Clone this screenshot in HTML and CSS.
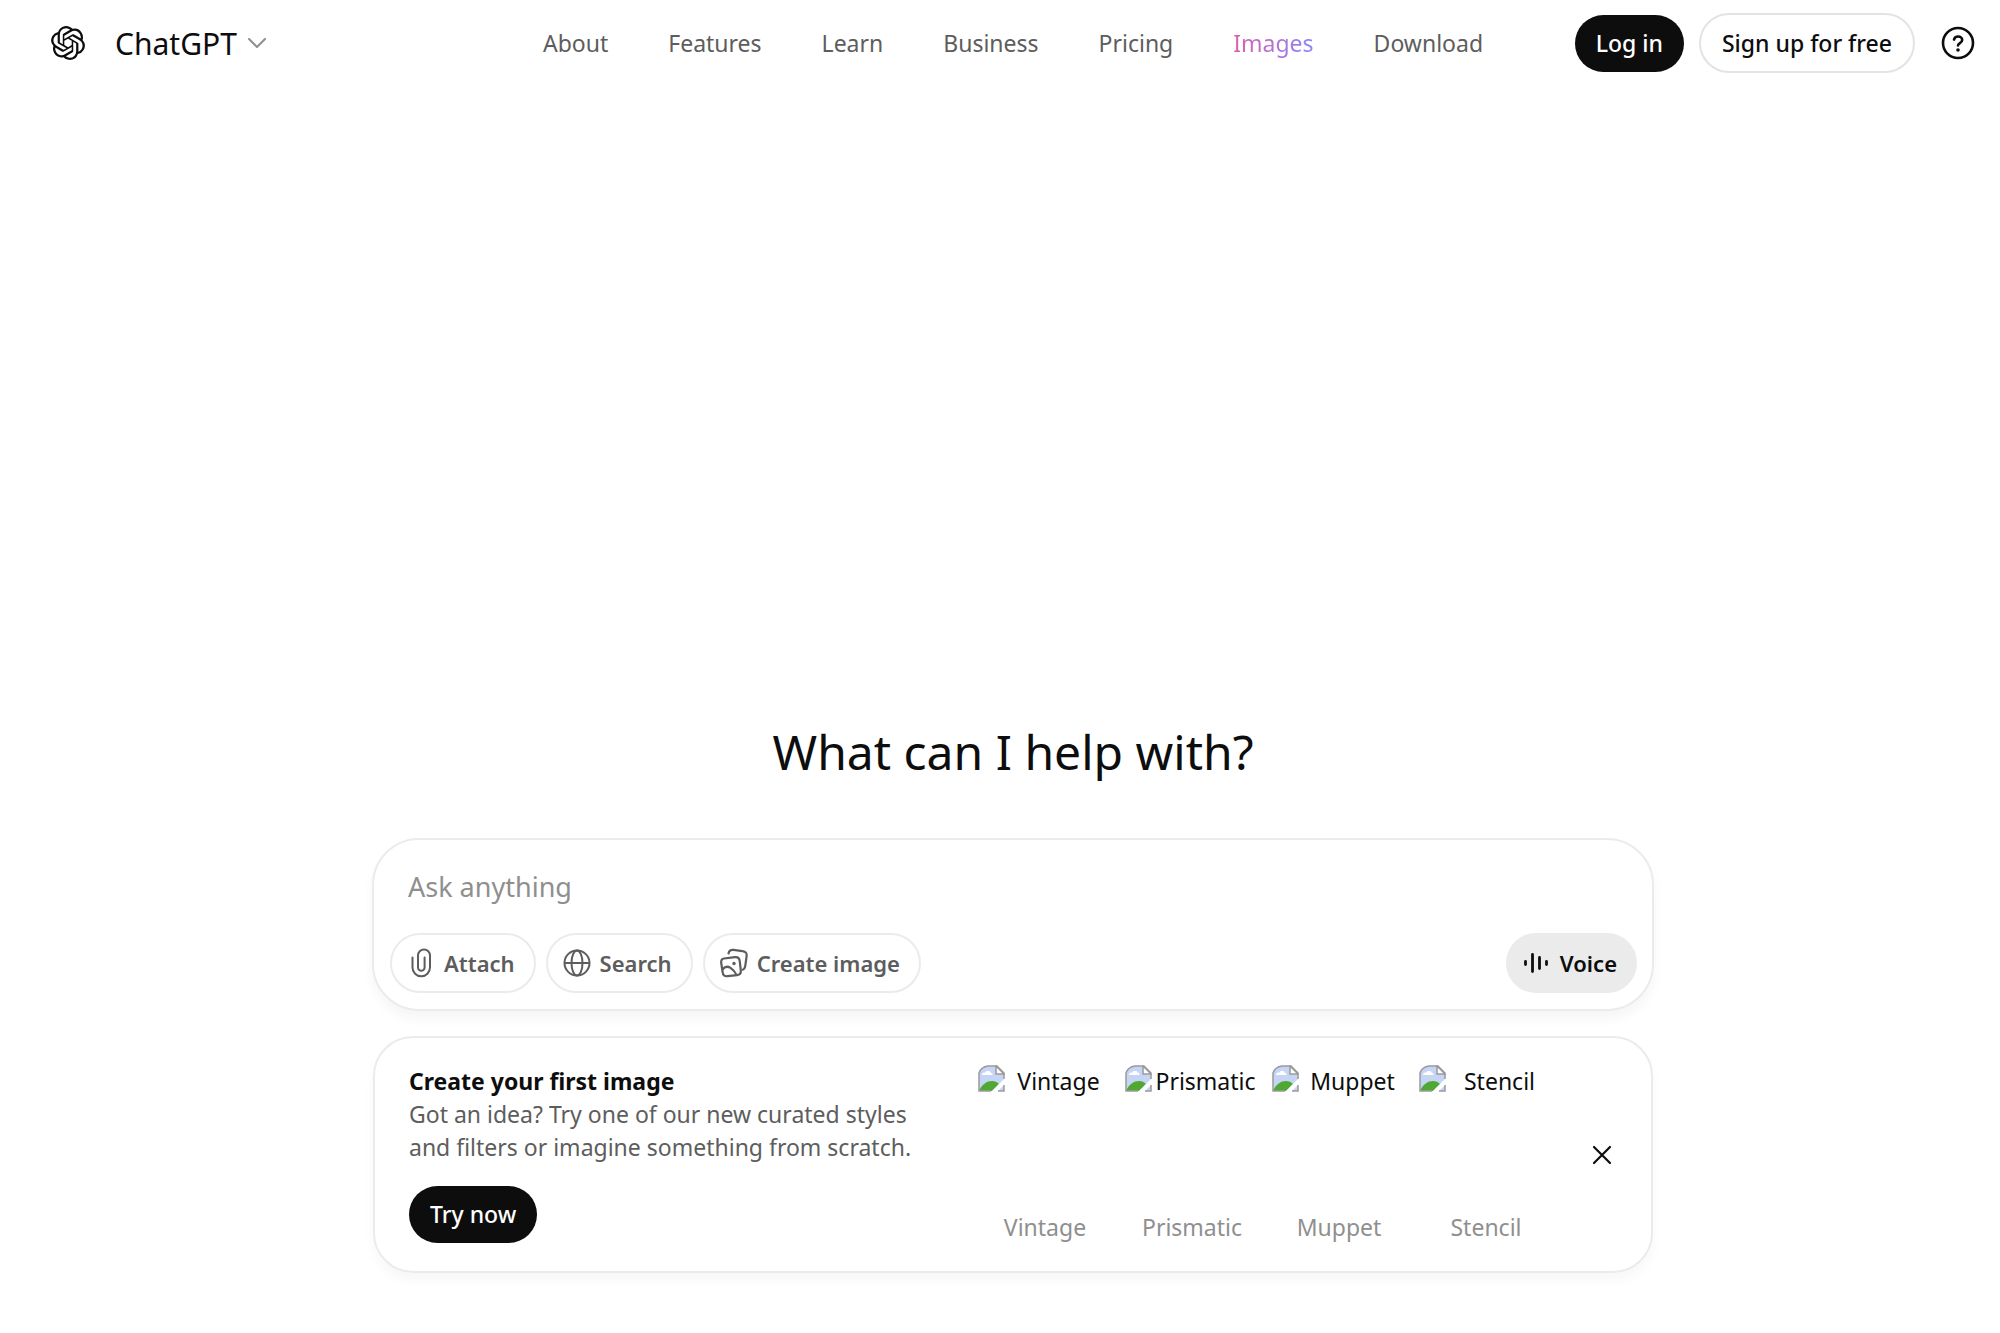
FILE: index.html
```html
<!DOCTYPE html>
<html lang="en">
<head>
  <meta charset="UTF-8">
  <meta name="viewport" content="width=device-width, initial-scale=1.0">
  <title>ChatGPT</title>
  <link rel="stylesheet" href="styles.css">
</head>
<body>
  <header class="header">
    <div class="brand">
      <a href="#" class="logo" aria-label="Home">
        <svg viewBox="0 0 24 24" width="34" height="34" fill="currentColor"><path d="M22.2819 9.8211a5.9847 5.9847 0 0 0-.5157-4.9108 6.0462 6.0462 0 0 0-6.5098-2.9A6.0651 6.0651 0 0 0 4.9807 4.1818a5.9847 5.9847 0 0 0-3.9977 2.9 6.0462 6.0462 0 0 0 .7427 7.0966 5.98 5.98 0 0 0 .511 4.9107 6.051 6.051 0 0 0 6.5146 2.9001A5.9847 5.9847 0 0 0 13.2599 24a6.0557 6.0557 0 0 0 5.7718-4.2058 5.9894 5.9894 0 0 0 3.9977-2.9001 6.0557 6.0557 0 0 0-.7475-7.0729zm-9.022 12.6081a4.4755 4.4755 0 0 1-2.8764-1.0408l.1419-.0804 4.7783-2.7582a.7948.7948 0 0 0 .3927-.6813v-6.7369l2.02 1.1686a.071.071 0 0 1 .038.052v5.5826a4.504 4.504 0 0 1-4.4945 4.4944zm-9.6607-4.1254a4.4708 4.4708 0 0 1-.5346-3.0137l.142.0852 4.783 2.7582a.7712.7712 0 0 0 .7806 0l5.8428-3.3685v2.3324a.0804.0804 0 0 1-.0332.0615L9.74 19.9502a4.4992 4.4992 0 0 1-6.1408-1.6464zM2.3408 7.8956a4.485 4.485 0 0 1 2.3655-1.9728V11.6a.7664.7664 0 0 0 .3879.6765l5.8144 3.3543-2.0201 1.1685a.0757.0757 0 0 1-.071 0l-4.8303-2.7865A4.504 4.504 0 0 1 2.3408 7.872zm16.5963 3.8558L13.1038 8.364 15.1192 7.2a.0757.0757 0 0 1 .071 0l4.8303 2.7913a4.4944 4.4944 0 0 1-.6765 8.1042v-5.6772a.79.79 0 0 0-.407-.667zm2.0107-3.0231l-.142-.0852-4.7735-2.7818a.7759.7759 0 0 0-.7854 0L9.409 9.2297V6.8974a.0662.0662 0 0 1 .0284-.0615l4.8303-2.7866a4.4992 4.4992 0 0 1 6.6802 4.66zM8.3065 12.863l-2.02-1.1638a.0804.0804 0 0 1-.038-.0567V6.0742a4.4992 4.4992 0 0 1 7.3757-3.4537l-.142.0805L8.704 5.459a.7948.7948 0 0 0-.3927.6813zm1.0976-2.3654l2.602-1.4998 2.6069 1.4998v2.9994l-2.5974 1.4997-2.6067-1.4997Z"/></svg>
      </a>
      <button type="button" class="model">
        ChatGPT
        <svg viewBox="0 0 18 10" width="18" height="10" fill="none" stroke="#8f8f8f" stroke-width="2" stroke-linecap="round" stroke-linejoin="round"><path d="M1 1l8 8 8-8"/></svg>
      </button>
    </div>

    <nav class="nav">
      <a href="#">About</a>
      <a href="#">Features</a>
      <a href="#">Learn</a>
      <a href="#">Business</a>
      <a href="#">Pricing</a>
      <a href="#" class="images">Images</a>
      <a href="#">Download</a>
    </nav>

    <div class="account">
      <button type="button" class="btn btn-dark">Log in</button>
      <button type="button" class="btn btn-light">Sign up for free</button>
      <button type="button" class="icon-btn help" aria-label="Help">
        <svg viewBox="0 0 34 34" width="34" height="34" fill="none" stroke="currentColor" stroke-width="2.600" stroke-linecap="round" stroke-linejoin="round"><circle cx="17" cy="17" r="15"/><path d="M13 13.6c.5-2 2-3.1 4-3.1 2.300 0 4.200 1.400 4.200 3.600 0 2.900-4.200 3-4.200 5.400"/><circle cx="17" cy="24" r="1.800" fill="currentColor" stroke="none"/></svg>
      </button>
    </div>
  </header>

  <main class="main">
    <h1>What can I help with?</h1>

    <form class="composer">
      <input type="text" class="prompt" placeholder="Ask anything" aria-label="Ask anything">
      <div class="tools">
        <button type="button" class="pill">
          <svg viewBox="0 0 30 30" width="30" height="30" fill="none" stroke="currentColor" stroke-width="2" stroke-linecap="round"><path d="M6.500 9.500v10a8.700 8.700 0 0 0 17.500 0V7.500a6 6 0 0 0-12 0v12a3.300 3.300 0 0 0 6.600 0v-10"/></svg>
          Attach
        </button>
        <button type="button" class="pill">
          <svg viewBox="0 0 30 30" width="30" height="30" fill="none" stroke="currentColor" stroke-width="2"><circle cx="15" cy="15" r="12.500"/><ellipse cx="15" cy="15" rx="5.500" ry="12.500"/><path d="M2.500 15h25"/></svg>
          Search
        </button>
        <button type="button" class="pill">
          <svg viewBox="0 0 30 30" width="30" height="30" fill="none" stroke="currentColor" stroke-width="2.200" stroke-linecap="round" stroke-linejoin="round"><path d="M9.500 5.500c.5-2.800 2-4 5-3.600l9 1.200c3.200.4 4.600 2 4.100 5.200l-1.300 9.400c-.3 2.300-1.300 3.600-2.600 4"/><path d="M5 10.500l11-1.300c3-.3 4.300.7 4.700 3.600l1.100 9.500c.3 3-.8 4.400-3.700 4.800l-9.600 1.100c-3 .3-4.500-.8-4.800-3.700L2.200 15c-.3-2.700.3-4.100 2.800-4.500z"/><path d="M3.500 21.500c2.500-3.200 5-3.600 8-1.600 3 2 4.800 4.400 6 7"/><circle cx="15" cy="15.500" r="1.700" fill="currentColor" stroke="none"/></svg>
          Create image
        </button>
        <button type="button" class="pill pill-voice">
          <svg viewBox="0 0 30 30" width="30" height="30" fill="none" stroke="currentColor" stroke-width="2.800" stroke-linecap="round"><path d="M3.500 13.500v3M10.500 6.500v17M17.500 9.500v11M24.500 13.500v3"/></svg>
          Voice
        </button>
      </div>
    </form>

    <section class="card">
      <div class="card-text">
        <h2>Create your first image</h2>
        <p>Got an idea? Try one of our new curated styles and filters or imagine something from scratch.</p>
        <button type="button" class="btn btn-dark">Try now</button>
      </div>
      <ul class="styles">
        <li>
          <div class="thumb"><svg class="broken"><use href="#broken"/></svg><span>Vintage</span></div>
          <span class="label">Vintage</span>
        </li>
        <li>
          <div class="thumb"><svg class="broken"><use href="#broken"/></svg><span>Prismatic</span></div>
          <span class="label">Prismatic</span>
        </li>
        <li>
          <div class="thumb"><svg class="broken"><use href="#broken"/></svg><span>Muppet</span></div>
          <span class="label">Muppet</span>
        </li>
        <li>
          <div class="thumb"><svg class="broken"><use href="#broken"/></svg><span>Stencil</span></div>
          <span class="label">Stencil</span>
        </li>
      </ul>
      <button type="button" class="icon-btn close" aria-label="Close">
        <svg viewBox="0 0 20 20" width="20" height="20" fill="none" stroke="currentColor" stroke-width="2.200" stroke-linecap="round"><path d="M2 2l16 16M18 2L2 18"/></svg>
      </button>
    </section>
  </main>

  <!-- missing image icon -->
  <svg width="0" height="0" class="defs">
    <symbol id="broken" viewBox="0 0 27 27">
      <path d="M1 26V8Q3 2 10 1h9l7 7v18z" fill="#c6d5f5"/>
      <path d="M4 10c0-2 2-3 3-2 1-3 5-3 6 0 2 0 2 2 1 2z" fill="#fff"/>
      <path d="M1 26c3-7 8-10 13-10 3 0 5 1 7 3l-7 7z" fill="#4ea831"/>
      <path d="M13 27L27 13v6l-8 8z" fill="#fff"/>
      <path d="M13 26H1V8Q3 2 10 1h9l7 7v6M26 20v6h-6" fill="none" stroke="#9a9a9a" stroke-width="1.500"/>
      <path d="M18 1v8h8z" fill="#fff" stroke="#9a9a9a" stroke-width="1.500"/>
    </symbol>
  </svg>
</body>
</html>
```
FILE: styles.css
```css
* {
  box-sizing: border-box;
}

body {
  display: flex;
  flex-direction: column;
  min-height: 100vh;
  margin: 0;
  font-family: "Noto Sans", sans-serif;
  font-size: 23px;
  line-height: 33px;
  color: #0d0d0d;
  background: #fff;
}

button,
input {
  font: inherit;
  color: inherit;
  border: none;
  background: none;
  padding: 0;
}

button {
  cursor: pointer;
}

svg {
  display: block;
  flex: none;
}

a {
  color: inherit;
  text-decoration: none;
}

.defs {
  position: absolute;
}

/* header */
.header {
  display: grid;
  grid-template-columns: 1fr auto 1fr;
  align-items: center;
  height: 86px;
  padding: 0 25px 0 51px;
}

.brand,
.model,
.account {
  display: flex;
  align-items: center;
}

.brand {
  gap: 30px;
}

.model {
  gap: 11px;
  font-size: 30px;
}

.nav {
  display: flex;
  gap: 60px;
  color: #5d5d5d;
}

.images {
  color: transparent;
  background: linear-gradient(90deg, #dc5fa8, #8b85f8);
  background-clip: text;
  -webkit-background-clip: text;
}

.account {
  justify-content: flex-end;
  gap: 15px;
}

.btn {
  height: 57px;
  padding: 0 21px;
  border-radius: 30px;
  font-weight: 500;
}

.btn-dark {
  color: #fff;
  background: #0d0d0d;
}

.btn-light {
  height: 60px;
  border: 2px solid #e3e3e3;
}

.help {
  margin-left: 11px;
}

/* main */
.main {
  display: flex;
  flex: 1;
  flex-direction: column;
  align-items: center;
  justify-content: flex-end;
  padding: 0 0 60px 26px;
}

h1 {
  margin: 0 0 58px;
  font-size: 48px;
  font-weight: 400;
  line-height: 57px;
}

.composer {
  display: flex;
  flex-direction: column;
  justify-content: space-between;
  width: 100%;
  max-width: 1282px;
  height: 173px;
  padding: 26px 15px 16px 16px;
  border: 2px solid #ebebeb;
  border-radius: 47px;
  box-shadow: 0 8px 12px rgba(0, 0, 0, 0.04);
}

.prompt {
  height: 40px;
  padding: 0 18px;
  font-size: 27px;
  outline: none;
}

.prompt::placeholder {
  color: #8f8f8f;
  opacity: 1;
}

.tools {
  display: flex;
  gap: 10px;
}

.pill {
  display: flex;
  align-items: center;
  gap: 8px;
  height: 60px;
  padding: 0 19px 0 14px;
  border: 2px solid #ebebeb;
  border-radius: 30px;
  font-size: 22px;
  font-weight: 600;
  color: #5d5d5d;
}

.pill-voice {
  margin-left: auto;
  padding-right: 18px;
  color: #0d0d0d;
  background: #ebebeb;
}

.card {
  display: flex;
  width: 100%;
  max-width: 1280px;
  height: 237px;
  margin-top: 25px;
  padding: 27px 39px 26px 34px;
  border: 2px solid #ebebeb;
  border-radius: 40px;
  box-shadow: 0 8px 12px rgba(0, 0, 0, 0.03);
}

.card-text {
  flex: 1;
}

h2,
p {
  margin: 0;
  font-size: inherit;
}

h2 {
  font-weight: 700;
}

p {
  max-width: 530px;
  color: #5d5d5d;
}

.card-text .btn {
  margin-top: 22px;
}

.styles {
  display: flex;
  gap: 13px;
  margin: 0;
  padding: 0;
  list-style: none;
}

.styles li {
  width: 134px;
  text-align: center;
}

.thumb {
  display: flex;
  height: 146px;
}

.thumb span {
  flex: 1;
}

.broken {
  width: 27px;
  height: 27px;
}

.label {
  color: #8f8f8f;
}

.close {
  align-self: center;
  margin-left: 39px;
}
```
